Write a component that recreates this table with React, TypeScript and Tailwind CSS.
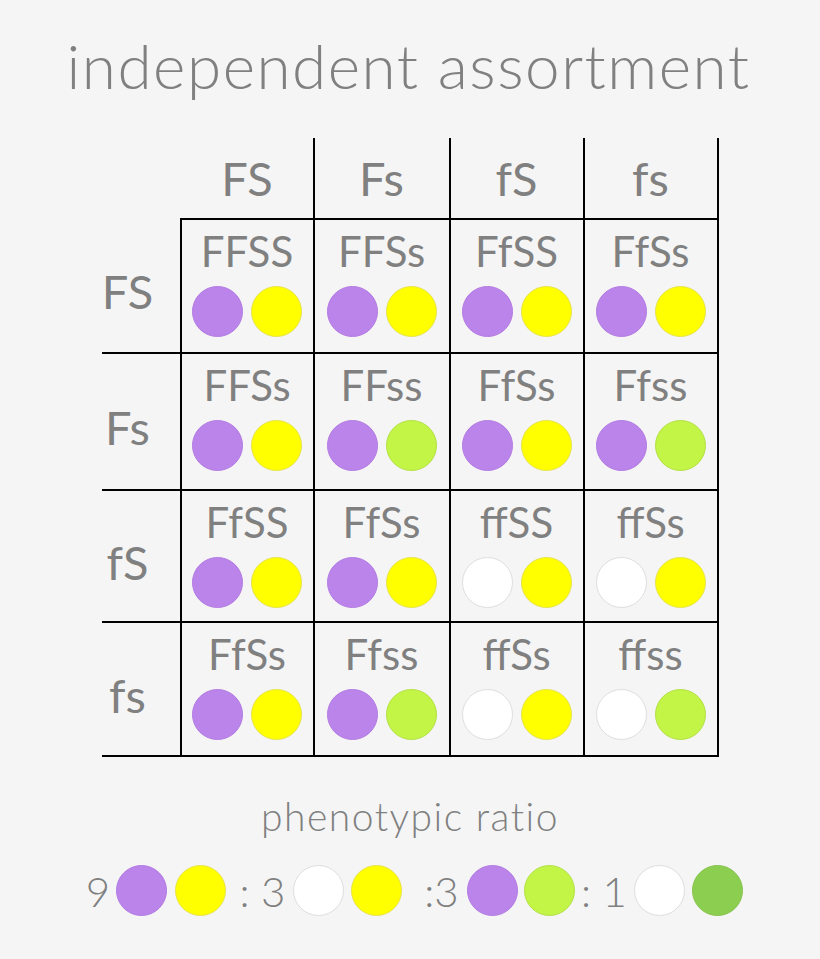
import React from "react";

type C = "p" | "y" | "w" | "g" | "d";

const colorClass: Record<C, string> = {
  p: "bg-[#ba84ea] border-[#b27ae2]",
  y: "bg-[#ffff00] border-[#e6e34a]",
  w: "bg-[#ffffff] border-[#dedede]",
  g: "bg-[#c3f546] border-[#b3e044]",
  d: "bg-[#8ccf50] border-[#85c24e]",
};

function Dot({ c, className = "" }: { c: C; className?: string }) {
  return <div className={`w-[51px] h-[51px] rounded-full border shrink-0 ${colorClass[c]} ${className}`} />;
}

const heads = ["FS", "Fs", "fS", "fs"];
const cells: string[][] = [
  ["FFSS", "FFSs", "FfSS", "FfSs"],
  ["FFSs", "FFss", "FfSs", "Ffss"],
  ["FfSS", "FfSs", "ffSS", "ffSs"],
  ["FfSs", "Ffss", "ffSs", "ffss"],
];
const rowH = ["h-[136px]", "h-[137px]", "h-[132px]", "h-[134px]"];
const colW = ["w-[135px]", "w-[136px]", "w-[134px]", "w-[134px]"];

export default function App() {
  return (
    <div
      className="w-[820px] h-[959px] bg-[#f5f5f5] flex flex-col items-center text-[#808080]"
      style={{ fontFamily: "Lato, 'Open Sans', sans-serif" }}
    >
      <div className="h-[138px] pt-[34px] text-[62px] leading-none font-light tracking-[1.5px] whitespace-nowrap pr-[3px]">
        independent assortment
      </div>
      <div className="grid grid-cols-[78px_135px_136px_134px_134px]">
        <div className="h-[80px]" />
        {heads.map((h, i) => (
          <div
            key={i}
            className={`h-[80px] ${colW[i]} border-r-2 border-black flex justify-center pt-[17px] text-[47px] leading-none ${
              i === 0 ? "pl-[2px]" : ""
            }`}
          >
            {h}
          </div>
        ))}
        {cells.map((row, r) => (
          <React.Fragment key={r}>
            <div
              className={`${rowH[r]} border-b-2 border-black flex items-center justify-center pt-[12px] pr-[26px] text-[47px] leading-none`}
            >
              {heads[r]}
            </div>
            {row.map((t, k) => {
              const first: C = t.includes("F") ? "p" : "w";
              const second: C = t.includes("S") ? "y" : "g";
              return (
                <div
                  key={k}
                  className={`${rowH[r]} border-r-2 border-b-2 border-black flex flex-col items-center pt-[10px] ${
                    k === 0 ? "border-l-2" : ""
                  } ${r === 0 ? "border-t-2" : ""}`}
                >
                  <div className="text-[42px] leading-none">{t}</div>
                  <div className="flex gap-[8px] mt-[14px]">
                    <Dot c={first} />
                    <Dot c={second} />
                  </div>
                </div>
              );
            })}
          </React.Fragment>
        ))}
      </div>
      <div className="mt-[40px] text-[39px] leading-none font-light tracking-[1.5px] whitespace-nowrap">
        phenotypic ratio
      </div>
      <div className="mt-[29px] flex items-center text-[42px] leading-none font-light pl-[11px] whitespace-nowrap">
        <span className="w-[20px] flex justify-center">9</span>
        <Dot c="p" className="ml-[8px]" />
        <Dot c="y" className="ml-[8px]" />
        <span className="w-[41px] ml-[16px] flex justify-center">: 3</span>
        <Dot c="w" className="ml-[10px]" />
        <Dot c="y" className="ml-[7px]" />
        <span className="w-[29px] ml-[25px] flex justify-center">:3</span>
        <Dot c="p" className="ml-[11px]" />
        <Dot c="g" className="ml-[6px]" />
        <span className="w-[34px] ml-[12px] flex justify-center">: 1</span>
        <Dot c="w" className="ml-[13px]" />
        <Dot c="d" className="ml-[7px]" />
      </div>
    </div>
  );
}
